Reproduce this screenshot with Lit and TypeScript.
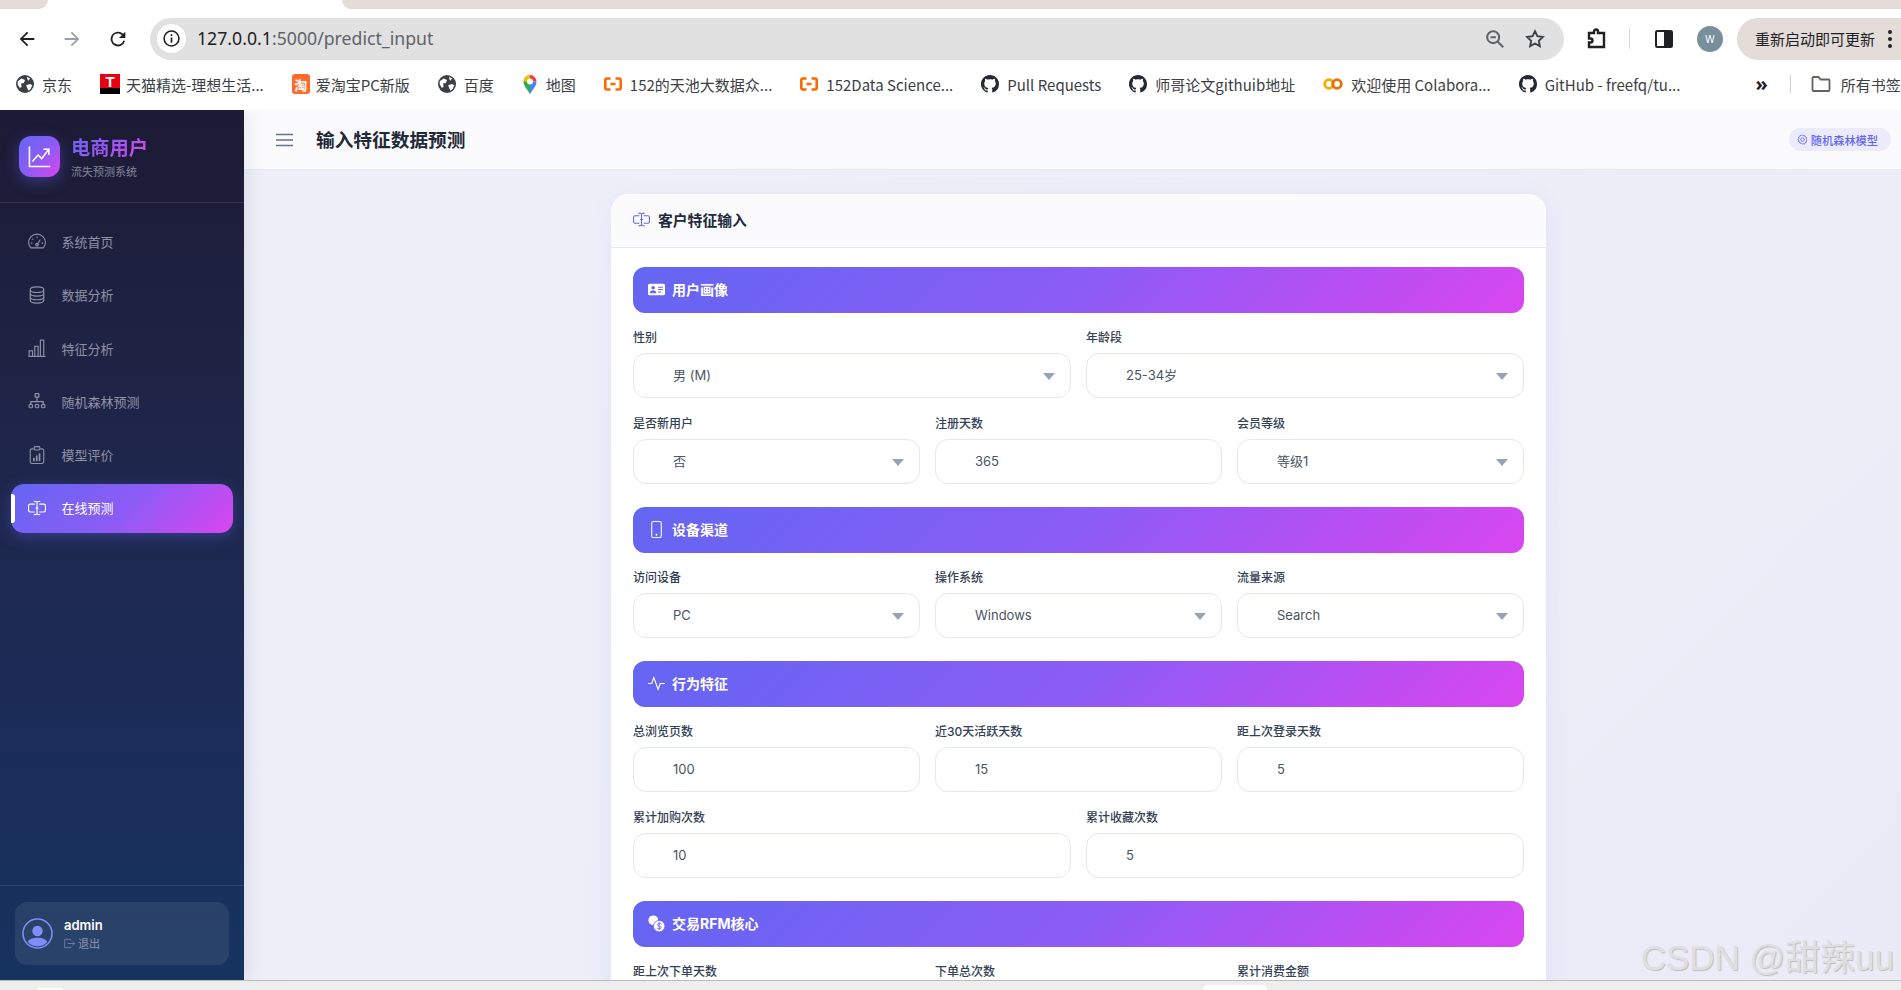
import { LitElement, html, svg, css, nothing } from 'lit';
import { customElement } from 'lit/decorators.js';

type Field = { label: string; value: string; select?: boolean };
type Section = { title: string; icon: string; rows: Field[][] };

const GH =
  'M8 0C3.58 0 0 3.58 0 8c0 3.54 2.29 6.53 5.47 7.59.4.07.55-.17.55-.38 0-.19-.01-.82-.01-1.49-2.01.37-2.53-.49-2.69-.94-.09-.23-.48-.94-.82-1.13-.28-.15-.68-.52-.01-.53.63-.01 1.08.58 1.23.82.72 1.21 1.87.87 2.33.66.07-.52.28-.87.51-1.07-1.78-.2-3.64-.89-3.64-3.95 0-.87.31-1.59.82-2.15-.08-.2-.36-1.02.08-2.12 0 0 .67-.21 2.2.82.64-.18 1.32-.27 2-.27.68 0 1.36.09 2 .27 1.53-1.04 2.2-.82 2.2-.82.44 1.1.16 1.92.08 2.12.51.56.82 1.27.82 2.15 0 3.07-1.87 3.75-3.65 3.95.29.25.54.73.54 1.48 0 1.07-.01 1.93-.01 2.2 0 .21.15.46.55.38A8.013 8.013 0 0016 8c0-4.42-3.58-8-8-8z';

const ICONS: Record<string, unknown> = {
  gauge: svg`<g fill="none" stroke="currentColor" stroke-width="1">
    <path d="M2.400 13.200h11.200c.9-1 1.900-2.800 1.900-4.700A7.500 7.500 0 0 0 .5 8.500c0 1.900 1 3.700 1.900 4.700z" />
    <path d="M8 10.500 11 5.800M8 3.200v1.300M3.800 5l.9.900M2.600 9h1.300M12.100 9h1.300" />
    <circle cx="8" cy="10.400" r="1.200" />
  </g>`,
  database: svg`<g fill="none" stroke="currentColor" stroke-width="1">
    <ellipse cx="8" cy="3.300" rx="6" ry="2.500" />
    <path d="M2 3.300v9.400c0 1.400 2.700 2.500 6 2.500s6-1.100 6-2.500V3.300" />
    <path d="M2 6.500c0 1.400 2.700 2.500 6 2.500s6-1.100 6-2.500M2 9.700c0 1.400 2.700 2.500 6 2.500s6-1.100 6-2.500" />
  </g>`,
  bars: svg`<g fill="none" stroke="currentColor" stroke-width="1">
    <path d="M.5 15.500h15" />
    <rect x="1" y="10.500" width="3" height="5" />
    <rect x="6" y="6.500" width="3" height="9" />
    <rect x="11" y="1" width="3" height="14.500" />
  </g>`,
  tree: svg`<g fill="none" stroke="currentColor" stroke-width="1.100">
    <rect x="6.300" y="1.500" width="3.400" height="3" rx=".6" />
    <path d="M8 4.500v4M2.500 11V8.500h11V11" />
    <rect x="1" y="11" width="3" height="3" rx="1" />
    <rect x="6.500" y="11" width="3" height="3" rx="1" />
    <rect x="12" y="11" width="3" height="3" rx="1" />
  </g>`,
  clipboard: svg`<g stroke="currentColor" fill="none" stroke-width="1">
      <path d="M5 2.500H3.500a1.500 1.500 0 0 0-1.500 1.500v10a1.500 1.500 0 0 0 1.500 1.500h9a1.500 1.500 0 0 0 1.500-1.500V4a1.500 1.500 0 0 0-1.500-1.500H11" />
      <rect x="5.500" y=".5" width="5" height="3" rx=".8" />
    </g>
    <path fill="currentColor" d="M4.500 10.500h1.500v3H4.500zM7 8.500h1.500v5H7zM9.500 6.500H11v7H9.500z" />`,
  input: svg`<path
      fill="currentColor"
      d="M5 2a.5.5 0 0 1 .5-.5c.862 0 1.573.287 2.06.566.174.099.321.198.44.286.119-.088.266-.187.44-.286A4.165 4.165 0 0 1 10.500 1.500a.5.5 0 0 1 0 1c-.638 0-1.177.213-1.564.434a3.490 3.490 0 0 0-.436.294V7.500H9a.5.5 0 0 1 0 1h-.5v4.272c.1.08.248.187.436.294.387.221.926.434 1.564.434a.5.5 0 0 1 0 1 4.165 4.165 0 0 1-2.060-.566A4.561 4.561 0 0 1 8 13.650a4.561 4.561 0 0 1-.44.285 4.165 4.165 0 0 1-2.060.566.5.5 0 0 1 0-1c.638 0 1.177-.213 1.564-.434.188-.107.335-.214.436-.294V8.500H7a.5.5 0 0 1 0-1h.5V3.228a3.490 3.490 0 0 0-.436-.294A3.166 3.166 0 0 0 5.500 2.500.5.5 0 0 1 5 2z"
    />
    <path
      fill="currentColor"
      d="M10 5h4a1 1 0 0 1 1 1v4a1 1 0 0 1-1 1h-4v1h4a2 2 0 0 0 2-2V6a2 2 0 0 0-2-2h-4v1zM6 5V4H2a2 2 0 0 0-2 2v4a2 2 0 0 0 2 2h4v-1H2a1 1 0 0 1-1-1V6a1 1 0 0 1 1-1h4z"
    />`,
  vcard: svg`<path
    fill="currentColor"
    fill-rule="evenodd"
    d="M1.500 2.500h13a1.500 1.500 0 0 1 1.500 1.500v8a1.500 1.500 0 0 1-1.500 1.500h-13A1.500 1.500 0 0 1 0 12V4a1.500 1.500 0 0 1 1.500-1.500zM9.500 5.300v1h4.500v-1zM9.500 7.500v1h4.500v-1zM9.500 9.800v1h3v-1zM4.800 4.700a1.700 1.700 0 1 0 0 3.400 1.700 1.700 0 0 0 0-3.400zM1.800 11.500h6c0-1.800-1.200-2.800-3-2.800s-3 1-3 2.800z"
  />`,
  phone: svg`<rect x="3.500" y=".5" width="9" height="15" rx="1.500" fill="none" stroke="currentColor" stroke-width="1" />
    <circle cx="8" cy="13" r=".9" fill="currentColor" />`,
  activity: svg`<path fill="none" stroke="currentColor" stroke-width="1.100" d="M0 8h3.500l2-5.500 4 11 2-5.500H16" />`,
  coins: svg`<circle cx="5" cy="5" r="4.600" fill="currentColor" />
    <circle cx="10.500" cy="10.500" r="5.400" fill="currentColor" stroke="#7162f2" stroke-width=".8" />
    <path
      fill="none"
      stroke="#7162f2"
      stroke-width=".9"
      d="M12.300 8.800c-.4-.7-1-1-1.800-1-1 0-1.700.5-1.700 1.300 0 1.800 3.600.9 3.600 2.800 0 .8-.8 1.300-1.900 1.300-.9 0-1.600-.4-1.900-1.100M10.500 6.800v7.300"
    />`,
  logout: svg`<path fill="none" stroke="currentColor" stroke-width="1" d="M10 3.500V2H1v12h9v-1.500M5.500 8h9.500M12 5l3 3-3 3" />`,
  person: svg`<path
      fill="currentColor"
      d="M8 4a2.700 2.700 0 1 1 0 5.400A2.700 2.700 0 0 1 8 4zM2.900 12.300C3.600 11 5.700 10.200 8 10.200s4.400.8 5.100 2.100A6.700 6.700 0 0 1 8 14.700a6.700 6.700 0 0 1-5.100-2.400z"
    />
    <circle cx="8" cy="8" r="7.500" fill="none" stroke="currentColor" stroke-width=".8" />`,
  graph: svg`<g fill="none" stroke="currentColor" stroke-width="1.100">
    <path d="M1 1v14h14.500" />
    <path d="M3 11.500 7 7l2.500 2.500L14.500 3" />
    <path d="M10.700 3h3.800v3.800" />
  </g>`,
  gear: svg`<g fill="none" stroke="currentColor" stroke-width="1.200">
    <circle cx="8" cy="8" r="2.600" />
    <path d="M8 1.200l1.300 1.500 2-.4.6 2 1.900.8-.6 1.900 1.300 1.500-1.300 1.500.6 1.900-1.900.8-.6 2-2-.4L8 14.800l-1.300-1.500-2 .4-.6-2-1.900-.8.600-1.900L1.500 8l1.300-1.500-.6-1.900 1.900-.8.6-2 2 .4z" />
  </g>`,
};

const icon = (name: string) => html`<svg viewBox="0 0 16 16">${ICONS[name]}</svg>`;

const NAV = [
  { label: '系统首页', icon: 'gauge' },
  { label: '数据分析', icon: 'database' },
  { label: '特征分析', icon: 'bars' },
  { label: '随机森林预测', icon: 'tree' },
  { label: '模型评价', icon: 'clipboard' },
  { label: '在线预测', icon: 'input', active: true },
];

const SECTIONS: Section[] = [
  {
    title: '用户画像',
    icon: 'vcard',
    rows: [
      [
        { label: '性别', value: '男 (M)', select: true },
        { label: '年龄段', value: '25-34岁', select: true },
      ],
      [
        { label: '是否新用户', value: '否', select: true },
        { label: '注册天数', value: '365' },
        { label: '会员等级', value: '等级1', select: true },
      ],
    ],
  },
  {
    title: '设备渠道',
    icon: 'phone',
    rows: [
      [
        { label: '访问设备', value: 'PC', select: true },
        { label: '操作系统', value: 'Windows', select: true },
        { label: '流量来源', value: 'Search', select: true },
      ],
    ],
  },
  {
    title: '行为特征',
    icon: 'activity',
    rows: [
      [
        { label: '总浏览页数', value: '100' },
        { label: '近30天活跃天数', value: '15' },
        { label: '距上次登录天数', value: '5' },
      ],
      [
        { label: '累计加购次数', value: '10' },
        { label: '累计收藏次数', value: '5' },
      ],
    ],
  },
  {
    title: '交易RFM核心',
    icon: 'coins',
    rows: [
      [
        { label: '距上次下单天数', value: '30' },
        { label: '下单总次数', value: '5' },
        { label: '累计消费金额', value: '1000' },
      ],
    ],
  },
];

const globe = html`<svg viewBox="0 0 16 16" class="bm-icon">
  <circle cx="8" cy="8" r="8" fill="#3c4043" />
  <path
    fill="#fff"
    d="M1.500 5.500 5 3l3 1.500-1 2.500-2.500.5.500 3-1.500 1-2-3zM10 1.500l2.500 1.500L11 5l-1-1.500zM9 9l3.500-1 2 1-1.500 3.500-2 1.500-1-2.500z"
  />
</svg>`;
const github = html`<svg viewBox="0 0 16 16" class="bm-icon"><path fill="#24292f" d=${GH} /></svg>`;
const bracket = html`<svg viewBox="0 0 18 14" class="bm-icon">
  <path
    fill="none"
    stroke="#ff6a00"
    stroke-width="2.600"
    d="M6.500 1.500H3A1.800 1.800 0 0 0 1.300 3.300v7.400A1.800 1.800 0 0 0 3 12.500h3.500M11.500 1.500H15a1.800 1.800 0 0 1 1.700 1.800v7.400a1.800 1.800 0 0 1-1.700 1.800h-3.500M6.500 7h5"
  />
</svg>`;

const BOOKMARKS = [
  { label: '京东', icon: globe },
  {
    label: '天猫精选-理想生活...',
    icon: html`<span class="bm-tmall"><b>T</b></span>`,
  },
  { label: '爱淘宝PC新版', icon: html`<span class="bm-taobao">淘</span>` },
  { label: '百度', icon: globe },
  {
    label: '地图',
    icon: html`<svg viewBox="0 0 16 20" class="bm-map">
      <path d="M8 20C5 15 1.500 12 1.500 7.500a6.500 6.500 0 0 1 6.500-6.500z" fill="#34a853" />
      <path d="M8 20c3-5 6.500-8 6.500-12.500L8 7.500z" fill="#4285f4" />
      <path d="M8 1a6.500 6.500 0 0 1 6.500 6.500H8z" fill="#ea4335" />
      <path d="M8 1a6.500 6.500 0 0 0-6.500 6.500H8z" fill="#fbbc04" />
      <circle cx="8" cy="7.500" r="3" fill="#fff" />
    </svg>`,
  },
  { label: '152的天池大数据众...', icon: bracket },
  { label: '152Data Science...', icon: bracket },
  { label: 'Pull Requests', icon: github },
  { label: '师哥论文githuib地址', icon: github },
  {
    label: '欢迎使用 Colabora...',
    icon: html`<svg viewBox="0 0 20 14" class="bm-colab">
      <circle cx="6" cy="7" r="4.300" fill="none" stroke="#f9ab00" stroke-width="2.800" />
      <circle cx="14" cy="7" r="4.300" fill="none" stroke="#e8710a" stroke-width="2.800" />
    </svg>`,
  },
  { label: 'GitHub - freefq/tu...', icon: github },
];

@customElement('app-root')
export class AppRoot extends LitElement {
  static styles = css`
    :host {
      display: flex;
      flex-direction: column;
      position: relative;
      height: 990px;
      overflow: hidden;
      background: #fff;
      color: #1f2937;
      font-family: 'Inter', 'Noto Sans CJK SC', sans-serif;
    }

    svg {
      display: block;
      flex: none;
    }

    /* browser chrome */
    .tabstrip {
      display: flex;
      justify-content: space-between;
      height: 9px;
    }

    .tab-left,
    .tab-right {
      background: #e3dcd9;
    }

    .tab-left {
      width: 48px;
      border-bottom-right-radius: 10px;
    }

    .tab-right {
      width: 1559px;
      border-bottom-left-radius: 10px;
    }

    .toolbar {
      display: flex;
      align-items: center;
      height: 51px;
      padding-top: 8px;
      box-sizing: border-box;
      color: #3c4043;
    }

    .nav-btn {
      width: 22px;
      height: 22px;
      margin-left: 16px;
      color: #202124;
    }

    .nav-btn.off {
      margin-left: 23px;
      color: #9aa0a6;
    }

    .nav-btn.reload {
      margin-left: 24px;
    }

    .omnibox {
      display: flex;
      align-items: center;
      width: 1414px;
      height: 42px;
      margin-left: 21px;
      border-radius: 21px;
      background: #e1e1e1;
      box-sizing: border-box;
      padding: 0 18px 0 7px;
    }

    .info {
      display: flex;
      align-items: center;
      justify-content: center;
      width: 29px;
      height: 29px;
      border-radius: 50%;
      background: #fff;
    }

    .info svg {
      width: 17px;
      height: 17px;
    }

    .url {
      margin: 0 0 2px 11px;
      font: 17.700px 'Noto Sans', 'Noto Sans CJK SC', sans-serif;
      color: #5f6368;
    }

    .url b {
      font-weight: 400;
      color: #202124;
    }

    .omni-actions {
      display: flex;
      align-items: center;
      gap: 18px;
      margin-left: auto;
    }

    .omni-actions svg {
      width: 22px;
      height: 22px;
    }

    .ext {
      width: 24px;
      height: 24px;
      margin-left: 21px;
    }

    .tb-divider {
      width: 1px;
      height: 20px;
      margin-left: 20px;
      background: #e0d8d5;
    }

    .panel {
      width: 20px;
      height: 20px;
      margin-left: 24px;
    }

    .profile {
      display: flex;
      align-items: center;
      justify-content: center;
      width: 26px;
      height: 26px;
      margin-left: 23px;
      border-radius: 50%;
      background: #78909c;
      color: #fff;
      font: 10px 'Noto Sans', sans-serif;
    }

    .update {
      display: flex;
      align-items: center;
      flex: 1;
      height: 42px;
      margin-left: 14px;
      padding-left: 18px;
      border-radius: 21px 0 0 21px;
      background: #e3dcd9;
      font: 15px 'Noto Sans CJK SC', sans-serif;
      color: #202124;
      white-space: nowrap;
    }

    .update svg {
      width: 6px;
      height: 20px;
      margin-left: 12px;
    }

    .bookmarks {
      display: flex;
      align-items: center;
      height: 50px;
      padding: 0 0 2px 16px;
      box-sizing: border-box;
      white-space: nowrap;
      overflow: hidden;
      font: 15px 'Noto Sans CJK SC', sans-serif;
      color: #3c4043;
    }

    .bookmark {
      display: flex;
      align-items: center;
      flex: none;
      gap: 8px;
      margin-right: 28px;
    }

    .bm-icon {
      width: 18px;
      height: 18px;
    }

    .bm-map {
      width: 16px;
      height: 20px;
    }

    .bm-colab {
      width: 20px;
      height: 14px;
    }

    .bm-tmall {
      display: flex;
      justify-content: center;
      width: 20px;
      height: 20px;
      margin-right: -2px;
      background: linear-gradient(#e60012 72%, #000 72%);
      color: #fff;
      font: 15px/16px 'Liberation Sans', sans-serif;
    }

    .bm-taobao {
      display: flex;
      align-items: center;
      justify-content: center;
      width: 18px;
      height: 20px;
      margin-right: -2px;
      border-radius: 3px;
      background: #ff6a2b;
      color: #fff;
      font-size: 13px;
      font-weight: 700;
    }

    .more {
      margin-left: 47px;
      font: 700 20px/1 'Noto Sans', sans-serif;
      color: #202124;
    }

    .bm-divider {
      width: 1px;
      height: 18px;
      margin: 0 20px 0 22px;
      background: #d5d0ce;
    }

    .folder {
      display: flex;
      align-items: center;
      gap: 10px;
      flex: none;
    }

    .folder svg {
      width: 20px;
      height: 18px;
    }

    /* app */
    .app {
      display: flex;
      height: 870px;
      overflow: hidden;
    }

    .sidebar {
      display: flex;
      flex-direction: column;
      flex: none;
      width: 244px;
      z-index: 1;
      background: linear-gradient(180deg, #1c1a34 0%, #1f2548 35%, #1c2b56 65%, #16335f 100%);
      box-shadow: 4px 0 20px rgba(0, 0, 0, 0.08);
      color: #8f92a6;
    }

    .brand {
      display: flex;
      align-items: center;
      gap: 11px;
      height: 93px;
      padding-left: 19px;
      box-sizing: border-box;
      border-bottom: 1px solid rgba(255, 255, 255, 0.1);
    }

    .logo {
      display: flex;
      align-items: center;
      justify-content: center;
      width: 41px;
      height: 41px;
      border-radius: 12px;
      background: linear-gradient(135deg, #6366f1, #8b5cf6 50%, #d946ef);
      box-shadow: 0 4px 15px rgba(99, 102, 241, 0.4);
      color: #fff;
    }

    .logo svg {
      width: 23px;
      height: 23px;
    }

    .brand-text {
      padding-top: 2px;
    }

    .brand-title {
      font-size: 19.300px;
      font-weight: 700;
      line-height: 24px;
      background: linear-gradient(135deg, #6366f1, #d946ef);
      -webkit-background-clip: text;
      background-clip: text;
      color: transparent;
    }

    .brand-sub {
      margin-top: 5px;
      font-size: 11px;
      line-height: 14px;
      color: #85859a;
    }

    nav {
      display: flex;
      flex-direction: column;
      flex: 1;
      gap: 4.300px;
      padding: 15px 11px 0;
    }

    .nav-item {
      display: flex;
      align-items: center;
      position: relative;
      gap: 15px;
      height: 49px;
      box-sizing: border-box;
      padding: 0 0 2px 17px;
      border-radius: 13px;
      font-size: 13px;
    }

    .nav-item span {
      margin-left: 0.5px;
    }

    .nav-item svg {
      width: 18px;
      height: 18px;
    }

    .nav-item.active {
      background: linear-gradient(135deg, #6366f1, #8b5cf6 50%, #d946ef);
      box-shadow: 0 4px 15px rgba(99, 102, 241, 0.35);
      color: #fff;
    }

    .nav-item.active::before {
      content: '';
      position: absolute;
      left: 0;
      top: 10px;
      bottom: 10px;
      width: 4px;
      border-radius: 0 3px 3px 0;
      background: #fff;
    }

    .side-foot {
      padding: 16px 15px;
      height: 95px;
      box-sizing: border-box;
      border-top: 1px solid rgba(255, 255, 255, 0.1);
    }

    .user {
      display: flex;
      align-items: center;
      gap: 11px;
      height: 63px;
      padding-left: 7px;
      border-radius: 12px;
      background: rgba(255, 255, 255, 0.08);
    }

    .avatar {
      width: 31px;
      height: 31px;
      color: #818cf8;
    }

    .user-name {
      font-size: 13px;
      font-weight: 600;
      line-height: 16px;
      color: #fff;
    }

    .logout {
      display: flex;
      align-items: center;
      gap: 3px;
      margin-top: 4px;
      font-size: 11px;
      line-height: 14px;
      color: #8a93ad;
    }

    .logout svg {
      width: 11px;
      height: 11px;
    }

    .main {
      flex: 1;
      min-width: 0;
      display: flex;
      flex-direction: column;
      background: linear-gradient(135deg, #eef0f8 0%, #ebebf7 100%);
    }

    .topbar {
      display: flex;
      align-items: center;
      flex: none;
      height: 60px;
      box-sizing: border-box;
      padding: 0 10px 0 32px;
      background: #fbfbfe;
      border-bottom: 1px solid #e7e9f2;
    }

    .burger {
      width: 17px;
      height: 14px;
      color: #64748b;
    }

    .page-title {
      margin: 0 0 3px 23px;
      font-size: 18.700px;
      font-weight: 700;
      color: #1f2937;
    }

    .model-badge {
      display: flex;
      align-items: center;
      gap: 3px;
      margin-left: auto;
      height: 23px;
      padding: 0 13px 0 8px;
      border-radius: 12px;
      background: #ecebfe;
      color: #6366f1;
      font-size: 11.200px;
      font-weight: 500;
    }

    .model-badge svg {
      width: 11px;
      height: 11px;
    }

    .content {
      flex: 1;
      padding: 24px 355px 0 367px;
      overflow: hidden;
    }

    .card {
      border-radius: 18px 18px 0 0;
      background: #fff;
      box-shadow: 0 4px 24px rgba(99, 102, 241, 0.08);
    }

    .card-head {
      display: flex;
      align-items: center;
      gap: 8px;
      height: 54px;
      box-sizing: border-box;
      padding: 0 0 2px 22px;
      border-radius: 18px 18px 0 0;
      background: #fbfbfe;
      border-bottom: 1px solid #e2e8f0;
      font-size: 14.800px;
      font-weight: 600;
      color: #1e293b;
    }

    .card-head svg {
      width: 17px;
      height: 17px;
      color: #6366f1;
    }

    .card-body {
      padding: 19px 22px 0;
    }

    .section + .section {
      margin-top: 23px;
    }

    .section-bar {
      display: flex;
      align-items: center;
      gap: 7px;
      height: 46px;
      box-sizing: border-box;
      margin-bottom: 17px;
      padding: 0 0 2px 15px;
      border-radius: 12px;
      background: linear-gradient(135deg, #6366f1, #8b5cf6 50%, #d946ef);
      color: #fff;
      font-size: 14px;
      font-weight: 700;
    }

    .section-bar svg {
      width: 17px;
      height: 17px;
    }

    .row {
      display: grid;
      gap: 15px;
    }

    .row + .row {
      margin-top: 18px;
    }

    .row label {
      display: block;
      margin-bottom: 7px;
      font-size: 12px;
      font-weight: 500;
      line-height: 16px;
      color: #334155;
    }

    .control {
      position: relative;
    }

    .control input,
    .control select {
      display: block;
      width: 100%;
      height: 45px;
      box-sizing: border-box;
      margin: 0;
      padding: 0 30px 1px 39px;
      border: 1.500px solid #e2e8f0;
      border-radius: 13px;
      outline: none;
      background: #fff;
      font: 13px 'Inter', 'Noto Sans CJK SC', sans-serif;
      color: #4b5563;
      appearance: none;
      -webkit-appearance: none;
    }

    .caret {
      position: absolute;
      right: 16px;
      top: 20px;
      width: 12px;
      height: 7px;
      color: #94a3b8;
    }

    /* bottom of the browser window */
    .statusbar {
      display: flex;
      flex: 1;
      background: #eee;
      border-top: 1px solid #bbb;
      align-items: flex-end;
      box-sizing: border-box;
    }

    .statusbar span {
      width: 26px;
      height: 2px;
      margin-left: 37px;
      border-radius: 6px 6px 0 0;
      background: #fff;
    }

    .statusbar span + span {
      width: 64px;
      height: 5px;
      margin-left: 1140px;
    }

    .watermark {
      position: absolute;
      right: 7px;
      bottom: 10px;
      font: 35px/44px 'Liberation Sans', 'Noto Sans CJK SC', sans-serif;
      color: #dfdfe2;
      text-shadow: 1px 1px 1px #bdbdc0;
      white-space: nowrap;
    }
  `;

  private renderChrome() {
    return html`
      <div class="tabstrip"><div class="tab-left"></div><div class="tab-right"></div></div>
      <div class="toolbar">
        <svg class="nav-btn" viewBox="0 0 24 24">
          <path d="M20 11H7.800l5.600-5.600L12 4l-8 8 8 8 1.400-1.400L7.800 13H20z" fill="currentColor" />
        </svg>
        <svg class="nav-btn off" viewBox="0 0 24 24">
          <path d="M4 11h12.200l-5.600-5.600L12 4l8 8-8 8-1.400-1.400 5.600-5.600H4z" fill="currentColor" />
        </svg>
        <svg class="nav-btn reload" viewBox="0 0 24 24">
          <path
            fill="currentColor"
            d="M17.650 6.350A8 8 0 1 0 19.750 14h-2.100A6 6 0 1 1 12 6c1.660 0 3.140.69 4.220 1.780L13 11h7V4z"
          />
        </svg>
        <div class="omnibox">
          <div class="info">
            <svg viewBox="0 0 16 16">
              <circle cx="8" cy="8" r="7" fill="none" stroke="#202124" stroke-width="1.500" />
              <path d="M7.200 7h1.600v5H7.200zM7.200 4h1.600v1.600H7.200z" fill="#202124" />
            </svg>
          </div>
          <span class="url"><b>127.0.0.1</b>:5000/predict_input</span>
          <div class="omni-actions">
            <svg viewBox="0 0 24 24">
              <g fill="none" stroke="#5f6368" stroke-width="2.200">
                <circle cx="10" cy="10" r="6.500" />
                <path d="M15 15l6 6M7 10h6" />
              </g>
            </svg>
            <svg viewBox="0 0 24 24">
              <path
                fill="none"
                stroke="#3c4043"
                stroke-width="2"
                d="M12 3.500l2.600 5.500 6 .8-4.400 4.100 1.100 5.900-5.300-2.900-5.300 2.900 1.100-5.900L3.400 9.800l6-.8z"
              />
            </svg>
          </div>
        </div>
        <svg class="ext" viewBox="0 0 24 24">
          <path
            fill="none"
            stroke="#202124"
            stroke-width="2.400"
            d="M4 6h5V4.500a2 2 0 0 1 4 0V6h6v14H4v-4.500h1.500a2 2 0 0 0 0-4H4z"
          />
        </svg>
        <div class="tb-divider"></div>
        <svg class="panel" viewBox="0 0 20 20">
          <rect x="2" y="2" width="16" height="16" rx="1.500" fill="none" stroke="#202124" stroke-width="2" />
          <path d="M10 2h8v16h-8z" fill="#202124" />
        </svg>
        <div class="profile">W</div>
        <div class="update">
          重新启动即可更新
          <svg viewBox="0 0 6 20">
            <circle cx="3" cy="3" r="2" fill="#202124" />
            <circle cx="3" cy="10" r="2" fill="#202124" />
            <circle cx="3" cy="17" r="2" fill="#202124" />
          </svg>
        </div>
      </div>
      <div class="bookmarks">
        ${BOOKMARKS.map((b) => html`<div class="bookmark">${b.icon}<span>${b.label}</span></div>`)}
        <span class="more">»</span>
        <div class="bm-divider"></div>
        <div class="folder">
          <svg viewBox="0 0 20 18">
            <path
              fill="none"
              stroke="#5f6368"
              stroke-width="1.800"
              d="M1.500 3a1 1 0 0 1 1-1h5l2 2.500h8a1 1 0 0 1 1 1V15a1 1 0 0 1-1 1h-15a1 1 0 0 1-1-1z"
            />
          </svg>
          所有书签
        </div>
      </div>
    `;
  }

  private renderSidebar() {
    return html`
      <aside class="sidebar">
        <div class="brand">
          <div class="logo">${icon('graph')}</div>
          <div class="brand-text">
            <div class="brand-title">电商用户</div>
            <div class="brand-sub">流失预测系统</div>
          </div>
        </div>
        <nav>
          ${NAV.map(
            (item) => html`
              <div class="nav-item ${item.active ? 'active' : ''}">${icon(item.icon)}<span>${item.label}</span></div>
            `
          )}
        </nav>
        <div class="side-foot">
          <div class="user">
            <div class="avatar">${icon('person')}</div>
            <div>
              <div class="user-name">admin</div>
              <div class="logout">${icon('logout')}退出</div>
            </div>
          </div>
        </div>
      </aside>
    `;
  }

  private renderField(f: Field) {
    return html`
      <div>
        <label>${f.label}</label>
        <div class="control">
          ${f.select
            ? html`<select><option>${f.value}</option></select>`
            : html`<input type="text" .value=${f.value} />`}
          ${f.select
            ? html`<svg class="caret" viewBox="0 0 12 7"><path d="M0 0h12L6 7z" fill="currentColor" /></svg>`
            : nothing}
        </div>
      </div>
    `;
  }

  render() {
    return html`
      ${this.renderChrome()}
      <div class="app">
        ${this.renderSidebar()}
        <div class="main">
          <header class="topbar">
            <svg class="burger" viewBox="0 0 17 14">
              <path d="M0 1.500h17M0 7h17M0 12.500h17" stroke="currentColor" stroke-width="1.500" />
            </svg>
            <div class="page-title">输入特征数据预测</div>
            <div class="model-badge">${icon('gear')}随机森林模型</div>
          </header>
          <div class="content">
            <div class="card">
              <div class="card-head">${icon('input')}客户特征输入</div>
              <div class="card-body">
                ${SECTIONS.map(
                  (s) => html`
                    <section class="section">
                      <div class="section-bar">${icon(s.icon)}${s.title}</div>
                      ${s.rows.map(
                        (r) => html`
                          <div class="row" style="grid-template-columns: repeat(${r.length}, 1fr)">
                            ${r.map((f) => this.renderField(f))}
                          </div>
                        `
                      )}
                    </section>
                  `
                )}
              </div>
            </div>
          </div>
        </div>
      </div>
      <div class="statusbar"><span></span><span></span></div>
      <div class="watermark">CSDN @甜辣uu</div>
    `;
  }
}
